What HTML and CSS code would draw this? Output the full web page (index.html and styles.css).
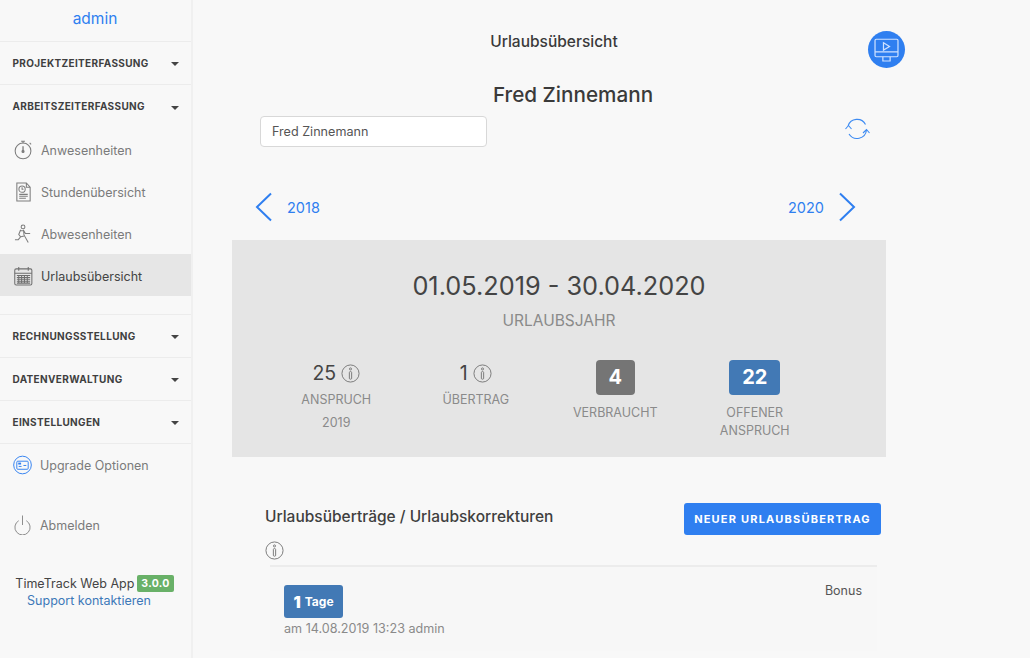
FILE: index.html
```html
<!DOCTYPE html>
<html lang="de">
<head>
<meta charset="utf-8">
<title>Urlaubsübersicht</title>
<link rel="stylesheet" href="styles.css">
</head>
<body>
<div class="app">
  <aside class="sidebar">
    <div class="user">admin</div>
    <div class="section"><span>PROJEKTZEITERFASSUNG</span><i class="caret"></i></div>
    <div class="section open"><span>ARBEITSZEITERFASSUNG</span><i class="caret"></i></div>
    <nav class="items">
      <a class="item">
        <svg class="ico" viewBox="0 0 20 20" fill="none" stroke="#7d7d7d" stroke-width="1.1"><circle cx="9.500" cy="11" r="8.300"/><path d="M7.500 .8h4M9.500 .8v2M16.500 2.500l1.500 1.500"/><path d="M9.500 6v6" stroke-width="1.400"/><circle cx="9.500" cy="11.500" r="1.100" fill="#7d7d7d"/></svg>
        <span>Anwesenheiten</span></a>
      <a class="item">
        <svg class="ico" viewBox="0 0 20 20" fill="none" stroke="#7d7d7d" stroke-width="1.1"><path d="M3 .5h10l4 4.500v14.500H3zM13 .5V5h4"/><circle cx="8.500" cy="7" r="3.300"/><path d="M8.500 5v2h1.500M5.500 12.500h9M5.500 14.500h9M5.500 16.500h7"/></svg>
        <span>Stundenübersicht</span></a>
      <a class="item">
        <svg class="ico" viewBox="0 0 20 20" fill="none" stroke="#7d7d7d" stroke-width="1.1"><circle cx="9.500" cy="2.500" r="2"/><path d="M7 5.500L5 10.500l2 2.500-2.500 3H1M10 5.500l.5 5.500 4.500 8M10 6l2 3.500h5M7 6.500h3M7.500 13l3-1"/></svg>
        <span>Abwesenheiten</span></a>
      <a class="item active">
        <svg class="ico" viewBox="0 0 20 20" fill="none" stroke="#6f6f6f" stroke-width="1.100"><rect x=".8" y="2.500" width="18" height="17" rx="1.500"/><path d="M.8 7h18M5 .5v4M15 .5v4M3 9.500h14M3 11.500h14M3 13.500h14M3 15.500h14M3 17.500h14M5 9v9M8 9v9M11 9v9M14 9v9"/></svg>
        <span>Urlaubsübersicht</span></a>
    </nav>
    <div class="section first-after"><span>RECHNUNGSSTELLUNG</span><i class="caret"></i></div>
    <div class="section"><span>DATENVERWALTUNG</span><i class="caret"></i></div>
    <div class="section last"><span>EINSTELLUNGEN</span><i class="caret"></i></div>
    <a class="link upgrade">
      <svg class="ico big" viewBox="0 0 20 20" fill="none" stroke="#2f7ff0" stroke-width="1"><circle cx="10" cy="10" r="9.300"/><rect x="4" y="6" width="12" height="8.500" rx="1"/><path d="M6 11.500h3M11 10.500h3"/><rect x="5.500" y="7.500" width="3" height="2" fill="#2f7ff0" stroke="none"/></svg>
      <span>Upgrade Optionen</span></a>
    <a class="link logout">
      <svg class="ico big" viewBox="0 0 20 20" fill="none" stroke="#888" stroke-width="1"><path d="M6 5.500a8 8 0 1 0 8 0M10 0v10"/></svg>
      <span>Abmelden</span></a>
    <div class="about">
      <div class="app-name">TimeTrack Web App <b class="version">3.0.0</b></div>
      <a class="support">Support kontaktieren</a>
    </div>
  </aside>

  <main class="main">
    <div class="topbar">
      <h1>Urlaubsübersicht</h1>
      <span class="video">
        <svg viewBox="0 0 24 24" fill="none" stroke="#cfe2ff" stroke-width="1"><rect x="2.500" y="3.500" width="19" height="14.500" rx="1"/><path d="M2.500 14h19M9 18v3.500h6V18M9.500 6.500l5 3-5 3z"/></svg>
      </span>
    </div>
    <h2 class="person">Fred Zinnemann</h2>
    <div class="filter">
      <div class="input">Fred Zinnemann</div>
      <svg class="refresh" viewBox="0 0 28 24" fill="none" stroke="#3d8bf2" stroke-width="1.100"><path d="M5 9A9.500 9.500 0 0 1 22.500 7.500M23.500 13A9.500 9.500 0 0 1 6 17M2.500 12L5.500 8.500L8.500 12M20 16L23.500 12.500L26.500 16"/></svg>
    </div>
    <div class="years">
      <a class="year"><svg class="chev" viewBox="0 0 18 30" fill="none" stroke="#2f7ff0" stroke-width="2"><path d="M16 1.500L2 15l14 13.500"/></svg><span>2018</span></a>
      <a class="year"><span>2020</span><svg class="chev" viewBox="0 0 18 30" fill="none" stroke="#2f7ff0" stroke-width="2"><path d="M2 1.500L16 15 2 28.500"/></svg></a>
    </div>
    <section class="panel">
      <div class="range">01.05.2019 - 30.04.2020</div>
      <div class="range-label">URLAUBSJAHR</div>
      <div class="stats">
        <div class="stat">
          <div class="num">25 <svg class="info" viewBox="0 0 20 20" fill="none" stroke="#777"><circle cx="10" cy="10" r="9"/><rect x="8.800" y="8" width="2.400" height="8" rx="1"/><circle cx="10" cy="5.200" r="1.100"/></svg></div>
          <div class="lbl">ANSPRUCH</div><div class="lbl sub">2019</div>
        </div>
        <div class="stat">
          <div class="num">1 <svg class="info" viewBox="0 0 20 20" fill="none" stroke="#777"><circle cx="10" cy="10" r="9"/><rect x="8.800" y="8" width="2.400" height="8" rx="1"/><circle cx="10" cy="5.200" r="1.100"/></svg></div>
          <div class="lbl">ÜBERTRAG</div>
        </div>
        <div class="stat">
          <div class="badge grey">4</div>
          <div class="lbl">VERBRAUCHT</div>
        </div>
        <div class="stat">
          <div class="badge blue">22</div>
          <div class="lbl">OFFENER<br>ANSPRUCH</div>
        </div>
      </div>
    </section>
    <div class="corr-head">
      <h3>Urlaubsüberträge / Urlaubskorrekturen</h3>
      <button class="new">NEUER URLAUBSÜBERTRAG</button>
    </div>
    <svg class="info solo" viewBox="0 0 20 20" fill="none" stroke="#777"><circle cx="10" cy="10" r="9"/><rect x="8.800" y="8" width="2.400" height="8" rx="1"/><circle cx="10" cy="5.200" r="1.100"/></svg>
    <div class="entry">
      <div class="entry-top"><span class="tage"><b>1</b> Tage</span><span class="bonus">Bonus</span></div>
      <div class="meta">am 14.08.2019 13:23 admin</div>
    </div>
  </main>
</div>
</body>
</html>
```

FILE: styles.css
```css
* { box-sizing: border-box; }
html, body { margin: 0; height: 658px; overflow: hidden; }
body { background: #f8f8f8; color: #444; font-family: Inter, "Liberation Sans", sans-serif; font-size: 13px; }
.app { display: flex; height: 658px; }

.sidebar { width: 193px; flex: none; border-right: 2px solid #f0f0f0; background: #f8f8f8; }
.user { height: 42px; line-height: 37px; text-align: center; color: #2f7ff0; font-size: 15.500px; border-bottom: 1px solid #ececec; padding-right: 1px; }
.section { height: 43px; display: flex; align-items: center; justify-content: space-between; padding: 0 12.500px 1px 12.500px; border-bottom: 1px solid #ececec; font-size: 10px; font-weight: 700; color: #3f3f3f; letter-spacing: .35px; }
.section.open { border-bottom: 0; }
.section.first-after { height: 44px; border-top: 1px solid #ececec; }
.caret { width: 0; height: 0; border-left: 4px solid transparent; border-right: 4px solid transparent; border-top: 4px solid #444; margin-top: 3px; }
.items { display: flex; flex-direction: column; height: 186px; }
.item { height: 42px; display: flex; align-items: center; gap: 8px; padding: 2px 0 0 14px; color: #7b7b7b; font-size: 12.500px; }
.item.active { background: #e6e6e6; color: #444; }
.ico { width: 19px; height: 20px; flex: none; }
.link { display: flex; align-items: center; gap: 8px; padding-left: 13px; color: #7b7b7b; font-size: 12.500px; }
.upgrade { margin-top: 10px; height: 22px; }
.logout { margin-top: 38px; height: 22px; }
.about { margin-top: 39px; text-align: center; font-size: 12.500px; line-height: 17px; color: #444; padding-right: 2px; }
.app-name { display: flex; justify-content: center; align-items: center; gap: 3px; height: 17px; }
.version { background: #69b168; color: #fff; font-size: 10.500px; font-weight: 700; padding: 0 4px; height: 17px; line-height: 17px; border-radius: 2px; letter-spacing: .3px; }
.support { display: block; color: #3d78b8; padding-right: 11px; }

.main { flex: 1; min-width: 0; padding-left: 40px; padding-right: 144px; }
.topbar { position: relative; height: 62px; }
h1 { margin: 0; padding: 33px 11px 0 0; text-align: center; font-size: 15.500px; line-height: 18px; font-weight: 500; color: #3a3a3a; }
.video { position: absolute; left: 635px; top: 31px; width: 37px; height: 37px; border-radius: 50%; background: #2f7ff0; display: flex; align-items: center; justify-content: center; }
.video svg { width: 29px; height: 29px; }
.person { margin: 20px 0 0; padding-left: 27px; text-align: center; font-size: 20.700px; line-height: 25px; font-weight: 500; color: #3a3a3a; }
.filter { display: flex; align-items: center; justify-content: space-between; margin-top: 9px; padding: 0 15px 0 27px; height: 31px; }
.input { width: 227px; height: 31px; background: #fff; border: 1px solid #d8d8d8; border-radius: 4px; line-height: 29px; padding-left: 11px; font-size: 12.600px; color: #555; }
.refresh { width: 28px; height: 24px; margin-bottom: 5px; }
.years { display: flex; justify-content: space-between; margin-top: 45px; padding: 0 30px 0 22px; height: 30px; }
.year { display: flex; align-items: center; gap: 14px; color: #2f7ff0; font-size: 14.500px; }
.chev { width: 18px; height: 30px; }
.panel { margin: 18px 0 0 -1px; height: 217px; background: #e5e5e5; text-align: center; padding-top: 29px; }
.range { font-size: 25.300px; line-height: 34px; color: #444; }
.range-label { margin-top: 9px; font-size: 15.500px; line-height: 18px; color: #8a8a8a; }
.stats { display: grid; grid-template-columns: repeat(4, 139.500px); margin-top: 30px; padding-left: 34.500px; }
.stat { text-align: center; }
.num { height: 26px; display: flex; align-items: center; justify-content: center; gap: 5px; font-size: 19.500px; color: #444; }
.info { width: 19px; height: 19px; flex: none; display: block; }
.lbl { font-size: 12.500px; line-height: 18px; color: #8a8a8a; }
.num + .lbl { margin-top: 5px; }
.lbl.sub { margin-top: 5px; }
.badge { margin: 0 auto 9px; height: 35px; border-radius: 4px; color: #fff; font-weight: 700; font-size: 20px; line-height: 35px; }
.badge.grey { width: 39px; background: #757575; }
.badge.blue { width: 51px; background: #4279b5; }
.corr-head { display: flex; justify-content: space-between; align-items: flex-start; margin-top: 46px; padding: 0 5px 0 32px; }
h3 { margin: 0; padding-top: 4px; font-size: 15.500px; line-height: 20px; font-weight: 500; color: #3f3f3f; }
.new { height: 32px; width: 197px; border: 0; border-radius: 3px; background: #2f7ff0; color: #fff; font: 700 11px Inter, "Liberation Sans", sans-serif; letter-spacing: 1.200px; padding: 0; }
.info.solo { margin: 6px 0 0 32px; }
.entry { margin: 5px 9px 0 37px; height: 86px; border-top: 2px solid #ececec; padding: 18px 15px 0 14px; background: #f7f7f7; }
.entry-top { display: flex; justify-content: space-between; align-items: flex-start; }
.tage { background: #4279b5; color: #fff; height: 33px; width: 59px; border-radius: 3px; display: flex; align-items: center; justify-content: center; gap: 4px; font-size: 12px; font-weight: 700; }
.tage b { font-size: 16px; }
.bonus { font-size: 12.500px; color: #555; margin-top: -2px; }
.meta { margin-top: 3px; font-size: 12.600px; color: #8a8a8a; }
```
